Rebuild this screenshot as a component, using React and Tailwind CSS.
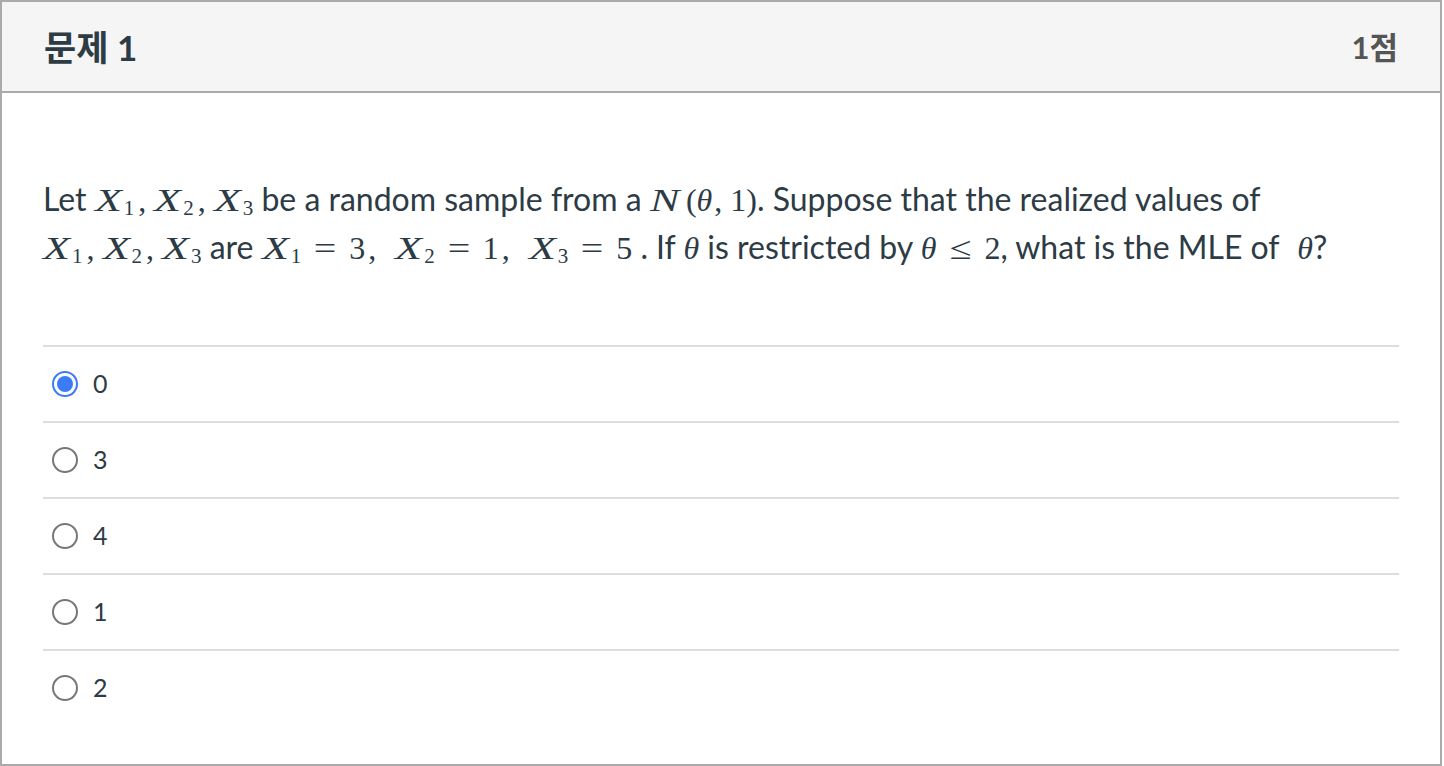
const mathFont = "font-['Liberation_Serif',serif] text-[32px] leading-none";

function Wide({ children, w }) {
  // stretch a math italic glyph so it takes the width of the TeX font
  return (
    <i className={`inline-block ${w}`}>
      <span className="inline-block origin-left scale-x-[1.38]">{children}</span>
    </i>
  );
}

function Var({ name, sub }) {
  return (
    <span className={mathFont}>
      <Wide w="w-[29px]">{name}</Wide>
      {sub && <span className="relative top-[4px] text-[21px]">{sub}</span>}
    </span>
  );
}

function M({ children }) {
  return <span className={mathFont}>{children}</span>;
}

function Comma({ wide }) {
  return <M><span className={wide ? "ml-[3px] mr-[19px]" : "ml-[4px] mr-[8px]"}>,</span></M>;
}

function Eq({ children }) {
  return (
    <M>
      <span className="mx-[13px] inline-block w-[22px] text-center">
        <span className="inline-block scale-x-[1.25]">{children}</span>
      </span>
    </M>
  );
}

function Theta({ className = "" }) {
  return <M><i className={`inline-block ${className}`}>θ</i></M>;
}

const options = ["0", "3", "4", "1", "2"];

export default function App() {
  return (
    <div className="w-[1444px] h-[766px] bg-white">
      <div className="w-[1442px] h-[766px] border-2 border-[#aaaaaa] flex flex-col">
        <div className="h-[91px] shrink-0 bg-[#f5f5f5] border-b-2 border-[#aaaaaa] flex items-center justify-between pl-[42px] pr-[42px] pt-[2px] font-['Lato','Noto_Sans_CJK_KR',sans-serif] font-bold">
          <span className="text-[35px] text-[#2d3b45]">문제 1</span>
          <span className="text-[31px] text-[#555555]">1점</span>
        </div>
        <div className="px-[41px] pt-[82px]">
          <div className="text-[32px] leading-[48px] text-[#2d3b45] font-['Lato',sans-serif] whitespace-nowrap">
            <div>
              Let <Var name="X" sub="1" /><Comma /><Var name="X" sub="2" /><Comma /><Var name="X" sub="3" /> be a random sample from a{" "}
              <M><Wide w="w-[32px]">N</Wide><span className="ml-[4px]">(</span><i>θ</i><span className="ml-[2px] mr-[8px]">,</span>1)</M>. Suppose that the realized values of
            </div>
            <div>
              <Var name="X" sub="1" /><Comma /><Var name="X" sub="2" /><Comma /><Var name="X" sub="3" /> are{" "}
              <Var name="X" sub="1" /><Eq>=</Eq><M>3</M><Comma wide /><Var name="X" sub="2" /><Eq>=</Eq><M>1</M><Comma wide /><Var name="X" sub="3" /><Eq>=</Eq><M>5</M> . If{" "}
              <Theta /> is restricted by <Theta /><Eq>≤</Eq><M>2</M>, what is the MLE of <Theta className="ml-[10px]" />?
            </div>
          </div>
          <div className="mt-[74px]">
            {options.map((o, i) => (
              <div key={o} className="h-[76px] border-t-2 border-[#dddddd] flex items-center pl-[9px] gap-[15px]">
                {i === 0 ? (
                  <span className="w-[26px] h-[26px] rounded-full border-2 border-[#3b7cf5] flex items-center justify-center">
                    <span className="w-[16px] h-[16px] rounded-full bg-[#3b7cf5]" />
                  </span>
                ) : (
                  <span className="w-[26px] h-[26px] rounded-full border-2 border-[#777777]" />
                )}
                <span className="text-[25px] text-[#2d3b45] font-['Lato',sans-serif]">{o}</span>
              </div>
            ))}
          </div>
        </div>
      </div>
    </div>
  );
}
